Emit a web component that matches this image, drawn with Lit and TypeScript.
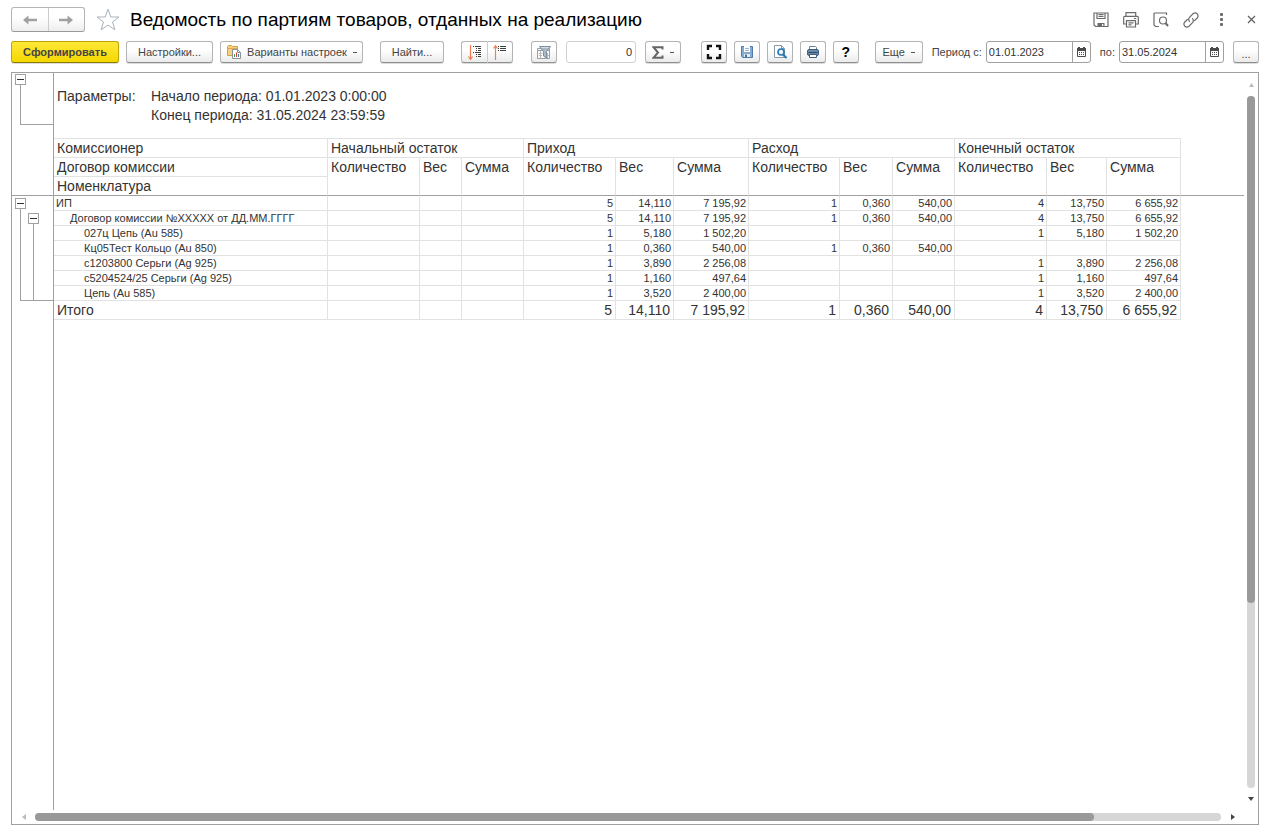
import { LitElement, html, css, svg, nothing } from "lit";
import { customElement, state } from "lit/decorators.js";
import { classMap } from "lit/directives/class-map.js";

interface Row {
  level: number;
  name: string;
  cells: string[];
}

const GROUPS = ["Начальный остаток", "Приход", "Расход", "Конечный остаток"];
const METRICS = ["Количество", "Вес", "Сумма"];
const E3 = ["", "", ""];

const ROWS: Row[] = [
  { level: 0, name: "ИП", cells: [...E3, "5", "14,110", "7 195,92", "1", "0,360", "540,00", "4", "13,750", "6 655,92"] },
  { level: 1, name: "Договор комиссии №XXXXX от ДД.ММ.ГГГГ", cells: [...E3, "5", "14,110", "7 195,92", "1", "0,360", "540,00", "4", "13,750", "6 655,92"] },
  { level: 2, name: "027ц Цепь (Au 585)", cells: [...E3, "1", "5,180", "1 502,20", ...E3, "1", "5,180", "1 502,20"] },
  { level: 2, name: "Кц05Тест Кольцо (Au 850)", cells: [...E3, "1", "0,360", "540,00", "1", "0,360", "540,00", ...E3] },
  { level: 2, name: "с1203800 Серьги (Ag 925)", cells: [...E3, "1", "3,890", "2 256,08", ...E3, "1", "3,890", "2 256,08"] },
  { level: 2, name: "с5204524/25 Серьги (Ag 925)", cells: [...E3, "1", "1,160", "497,64", ...E3, "1", "1,160", "497,64"] },
  { level: 2, name: "Цепь (Au 585)", cells: [...E3, "1", "3,520", "2 400,00", ...E3, "1", "3,520", "2 400,00"] },
];
const TOTAL = [...E3, "5", "14,110", "7 195,92", "1", "0,360", "540,00", "4", "13,750", "6 655,92"];

const icon = (size: number, body: unknown, height = size) =>
  html`<svg width=${size} height=${height} viewBox="0 0 ${size} ${height}" fill="none" aria-hidden="true">${body}</svg>`;

const arrowLeft = icon(16, svg`<path d="M1 6 6.500 1.500V4.700H15V7.300H6.500V10.500Z" fill="#a0a0a0"/>`, 12);
const arrowRight = icon(16, svg`<path d="M15 6 9.500 1.500V4.700H1V7.300H9.500V10.500Z" fill="#a0a0a0"/>`, 12);
const star = icon(24, svg`<path d="M12 1.200 14.800 9H23L16.500 13.900 18.900 21.800 12 17.100 5.100 21.800 7.500 13.900 1 9H9.200Z" stroke="#a9b2bb" stroke-width="1"/>`, 23);

const hSave = icon(16, svg`<g stroke="#6b6b6b" stroke-width="1.200"><path d="M1 1H15V14.500H2.500L1 13Z"/><path d="M4 1V6.500H12V1M5.500 2.700H10.500M5.500 4.500H10.500"/></g><path d="M4.500 11H11.500V14.500H4.500Z" fill="#6b6b6b"/><path d="M9 12H10.300V14H9Z" fill="#fff"/>`);
const hPrint = icon(16, svg`<g stroke="#6b6b6b" stroke-width="1.200"><path d="M3 4.300V.7H12.700V4.300"/><path d="M3 12H.7V5.300Q.7 4.300 1.700 4.300H14.300Q15.300 4.300 15.300 5.300V12H13"/><path d="M3.500 8.700H12.500V15H3.500ZM5.500 10.800H10.500M5.500 12.900H8.500M11 6.500H13.300"/></g>`);
const hPreview = icon(16, svg`<g stroke="#6b6b6b" stroke-width="1.200"><path d="M6 14.500H2.500L1 13V2Q1 1 2 1H13.500V3"/><circle cx="10" cy="8.500" r="3.500"/><path d="M12.500 11 15 14" stroke-width="2"/></g>`);
const hLink = icon(16, svg`<g stroke="#6b6b6b" stroke-width="1.200" stroke-linecap="round"><path d="M6.500 9.500Q4.800 7.300 6.500 5.300L10 1.800Q12.200 0 14.200 1.800 16 4 14.200 6L11.700 8.500"/><path d="M9.500 6.500Q11.200 8.700 9.500 10.700L6 14.200Q3.800 16 1.800 14.200 0 12 1.800 10L4.300 7.500"/></g>`);
const hDots = icon(16, svg`<g fill="#6b6b6b"><rect x="7" y="1" width="3" height="3" rx="1"/><rect x="7" y="6" width="3" height="3" rx="1"/><rect x="7" y="11" width="3" height="3" rx="1"/></g>`);
const hClose = icon(16, svg`<path d="M5 4 12 11M12 4 5 11" stroke="#5f5f5f" stroke-width="1.200"/>`);

const variants = icon(16, svg`<path d="M1.500 11.500V2.500L2.500 1.500H5.500L6.500 2.500H11.500V11.500Z" fill="#f8cf7c" stroke="#d6a044"/><path d="M2 4.500H11" stroke="#dca952"/><path d="M6.500 5.500H11.500L14.500 8.500V14.500H6.500Z" fill="#fff" stroke="#8794a0"/><path d="M11.500 5.500V8.500H14.500" stroke="#8794a0"/><path d="M8.500 13V10" stroke="#4a9b4a"/><path d="M10.500 13V8.500" stroke="#d33b2f"/><path d="M12.500 13V10" stroke="#4178b5"/>`);
const expand = icon(14, svg`<path d="M2.500 0V14M.5 11.500 2.500 14.500 4.500 11.500" stroke="#f07f4f" stroke-width="1.200"/><path d="M5 1.500H6M7 1.500H13M8 3.500H9M10 3.500H13M8 5.500H9M10 5.500H13M5 7.500H6M7 7.500H13M8 9.500H9M10 9.500H13M8 11.500H9M10 11.500H13" stroke="#3c3c3c"/>`, 15);
const collapse = icon(14, svg`<path d="M2.500 15V1M.5 3.500 2.500 .7 4.500 3.500" stroke="#f07f4f" stroke-width="1.200"/><path d="M5 1.500H6M7 1.500H13M5 3.500H6M7 3.500H13M5 5.500H6M7 5.500H13" stroke="#3c3c3c"/>`, 15);
const filter = icon(16, svg`<path d="M1.500 3.500H13.500V13.500H1.500Z" fill="#f7f7f7" stroke="#98a1a8"/><path d="M1.500 5.500H13.500" stroke="#98a1a8"/><path d="M4.500 6V13M11.500 8V13M3 8.500H6M3 10.500H6M10 10.500H13" stroke="#b4bbc1"/><path d="M3.500 1.500H14.500L10.500 6.500V13L7.500 11V6.500Z" fill="#a9b8c5" stroke="#7f8f9d"/><path d="M5 2.500H13" stroke="#d3dce4"/>`, 15);
const sigma = icon(12, svg`<path d="M10.500 3.500V1.200H1.500L6 6.500 1.500 11.800H10.500V9.500" stroke="#666" stroke-width="2"/>`, 13);
const full = icon(16, svg`<path d="M2 6V2H6M10 2H14V6M14 10V14H10M6 14H2V10" stroke="#111" stroke-width="2.400"/>`);
const save = icon(14, svg`<path d="M1.500 1.500H12.500V12.500H2.500L1.500 11.500Z" fill="#85abd0" stroke="#527ca6"/><path d="M4 1H10V7H4Z" fill="#fff"/><path d="M5 3.500H9M5 5.500H9" stroke="#9eb9d3"/><path d="M4 9H10V12H4Z" fill="#e6eef5"/><path d="M5 9.500H7V12H5Z" fill="#44719f"/>`);
const preview = icon(16, svg`<path d="M2.500 1.500H9.500L12.500 4.500V13.500H2.500Z" fill="#fff" stroke="#8a99a6"/><path d="M9.500 1.500V4.500H12.500" stroke="#8a99a6"/><circle cx="9" cy="8" r="3" fill="#eaf4fb" stroke="#2879b0" stroke-width="1.600"/><path d="M11 10.500 14.500 14" stroke="#2879b0" stroke-width="2.200"/>`);
const print = icon(14, svg`<path d="M3.500 5V1.500H9.500L10.500 2.500V5" fill="#fff" stroke="#65809b"/><rect x="1.500" y="4.500" width="11" height="6" rx="1.500" fill="#6b8aa9" stroke="#3f6183"/><path d="M2.500 7.500H11.500" stroke="#2f4c69"/><path d="M3.500 9.500H10.500V12.500H3.500Z" fill="#fff" stroke="#3c5e80"/>`);
const calendar = icon(9, svg`<path d="M.5 2H8.500V9.500H.5Z" stroke="#4b4b4b"/><path d="M0 1H9V4H0ZM1 0H3V2H1ZM6 0H8V2H6Z" fill="#4b4b4b"/><path d="M2 5.500H7M2 7.500H7" stroke="#4b4b4b" stroke-dasharray="1 1"/>`, 10);
const minus = icon(9, svg`<path d="M1 4.500H8" stroke="#333"/>`);

const HEADER_ICONS: [string, unknown][] = [
  ["Сохранить", hSave],
  ["Печать", hPrint],
  ["Предварительный просмотр", hPreview],
  ["Получить ссылку", hLink],
  ["Дополнительно", hDots],
  ["Закрыть", hClose],
];
const VIEW_ICONS: [string, unknown][] = [
  ["Во весь экран", full],
  ["Сохранить как", save],
  ["Просмотр", preview],
  ["Напечатать", print],
];

@customElement("app-root")
export class AppRoot extends LitElement {
  @state() private from = "01.01.2023";
  @state() private to = "31.05.2024";

  static styles = css`
    :host {
      display: flex;
      flex-direction: column;
      box-sizing: border-box;
      min-height: 100vh;
      padding: 7px 16px 9px 11px;
      background: #fff;
      color: #333;
      font-family: "Liberation Sans", Arial, sans-serif;
      font-size: 11px;
    }
    * { box-sizing: border-box; }
    svg { display: block; flex: none; }
    button, input { font: inherit; color: inherit; margin: 0; }
    button { padding: 0; border: 0; background: none; }

    .head { display: flex; align-items: center; height: 25px; }
    .nav {
      display: flex;
      width: 74px;
      height: 25px;
      border: 1px solid #b4b4b4;
      border-bottom-color: #999;
      border-radius: 3px;
      background: linear-gradient(#fff 40%, #eee);
    }
    .nav button { flex: 1; display: grid; place-items: center; }
    .nav button + button { border-left: 1px solid #ccc; }
    .star { margin: 0 10px 0 11px; }
    .title { flex: 1; margin: 0; font-size: 19px; line-height: 24px; font-weight: 400; color: #000; white-space: nowrap; }
    .tools { display: flex; gap: 14px; }

    .bar { display: flex; align-items: center; gap: 17px; margin-top: 9px; height: 22px; white-space: nowrap; }
    .set { display: flex; align-items: center; gap: 7px; }
    .wide { gap: 9px; }
    .right { margin-left: auto; }
    .views { margin-right: 7px; }
    .btn {
      display: flex;
      align-items: center;
      justify-content: center;
      gap: 5px;
      height: 22px;
      min-width: 26px;
      border: 1px solid #b4b4b4;
      border-bottom-color: #8f8f8f;
      border-radius: 3px;
      background: linear-gradient(#fff 40%, #ebebeb);
      box-shadow: 0 1px 0 #ddd;
      color: #444;
    }
    .run { width: 108px; font-weight: 700; border-color: #c2a400; border-bottom-color: #8f7a00; background: linear-gradient(#ffe838, #f5d800); color: #444; }
    .setup { width: 87px; }
    .variants { width: 143px; }
    .find { width: 64px; }
    .sum { width: 36px; }
    .more { width: 48px; }
    .help { font-size: 14px; font-weight: 700; color: #000; }
    .dots { padding-top: 4px; }
    .caret { width: 4px; height: 1px; margin: 1px 0 0 1px; background: #555; }
    .pair { display: flex; margin-right: 1px; }
    .pair .btn:first-child { border-radius: 3px 0 0 3px; border-right: 0; }
    .pair .btn:last-child { border-radius: 0 3px 3px 0; border-left-color: #ccc; }
    .num { width: 70px; height: 22px; padding: 0 3px; border: 1px solid #d0d0d0; border-radius: 3px; text-align: right; }
    .label { color: #444; }
    .near { margin-left: -5px; }
    .date { display: flex; width: 105px; height: 22px; border: 1px solid #a0a0a0; border-radius: 3px; background: #fff; }
    .date input { flex: 1; min-width: 0; padding: 0 2px; border: 0; background: none; outline: 0; }
    .date button { width: 18px; display: grid; place-items: center; border-left: 1px solid #a0a0a0; }

    .panel {
      flex: 1;
      display: grid;
      grid-template: minmax(0, 1fr) 14px / minmax(0, 1fr) 14px;
      margin-top: 9px;
      border: 1px solid #a0a0a0;
    }
    .sheet { display: flex; overflow: hidden; }
    .gutter { flex: none; width: 42px; border-right: 1px solid #a0a0a0; }
    .frozen { height: 123px; padding: 1px 0 0 3px; border-bottom: 1px solid #a0a0a0; }
    .tree { display: grid; grid-template: 11px minmax(0, 1fr) / 1fr; height: 51px; }
    .nested { grid-template: 11px 4px 11px minmax(0, 1fr) / 13px 1fr; height: 103px; margin: 2px 0 0 3px; }
    .toggle { display: grid; place-items: center; width: 11px; height: 11px; border: 1px solid #a0a0a0; background: #fff; }
    .stem { grid-row: 2 / -1; grid-column: 1 / -1; margin-left: 5px; border: solid #a0a0a0; border-width: 0 0 1px 1px; }
    .inner { grid-row: 3; grid-column: 2; }
    .innerstem { grid-row: 4; grid-column: 2; border-bottom: 0; }

    .content { flex: 1; min-width: 0; }
    .params {
      display: grid;
      grid-template-columns: 94px 1fr;
      margin: 0;
      padding: 14px 3px 13px;
      font-size: 14px;
      line-height: 19px;
    }
    .params dd { margin: 0; grid-column: 2; }
    table { width: 100%; table-layout: fixed; border-collapse: separate; border-spacing: 0; }
    .c-name { width: 274px; } .c92 { width: 92px; } .c91 { width: 91px; } .c42 { width: 42px; }
    .c62 { width: 62px; } .c58 { width: 58px; } .c75 { width: 75px; } .c53 { width: 53px; }
    .c60 { width: 60px; } .c74 { width: 74px; }
    th, td { padding: 0 2px; border: solid #e2e2e2; border-width: 0 1px 1px 0; font-weight: 400; text-align: left; vertical-align: top; white-space: nowrap; line-height: 14px; }
    thead th { padding: 0 3px; font-size: 14px; line-height: 18px; }
    thead tr:first-child th { border-top-width: 1px; }
    thead .base { border-bottom-color: #a0a0a0; }
    .rest { border: 0; }
    thead tr:first-child .rest { border: solid #a0a0a0; border-width: 0 0 1px; }
    td { text-align: right; }
    .l1 { padding-left: 16px; }
    .l2 { padding-left: 30px; }
    tfoot th, tfoot td { padding: 0 3px; font-size: 14px; line-height: 18px; }

    .vbar { display: grid; grid-template-rows: 23px 1fr 22px; justify-items: center; }
    .hbar { display: grid; grid-template-columns: 23px 1fr 23px; align-items: center; }
    .vbar > *, .hbar > * { place-self: center; }
    .vbar .track { width: 8px; height: 100%; }
    .hbar .track { height: 8px; width: 100%; }
    .track { border-radius: 4px; background: #d6d6d6; }
    .thumb { border-radius: 4px; background: #999; }
    .vbar .thumb { height: 73.2%; }
    .hbar .thumb { width: 89.3%; height: 8px; }
  `;

  private dateField(id: string, value: string, set: (v: string) => void) {
    return html`<span class="date">
      <input id=${id} type="text" .value=${value} @change=${(e: Event) => set((e.target as HTMLInputElement).value)} />
      <button type="button" aria-label="Выбрать дату">${calendar}</button>
    </span>`;
  }

  private toolbar() {
    return html`<div class="bar" role="toolbar">
      <div class="set">
        <button class="btn run">Сформировать</button>
        <button class="btn setup">Настройки...</button>
        <button class="btn variants">${variants}<span>Варианты настроек</span><i class="caret"></i></button>
      </div>
      <button class="btn find">Найти...</button>
      <div class="pair">
        <button class="btn" aria-label="Развернуть группы">${expand}</button>
        <button class="btn" aria-label="Свернуть группы">${collapse}</button>
      </div>
      <div class="set wide">
        <button class="btn" aria-label="Отбор">${filter}</button>
        <input class="num" type="text" value="0" aria-label="Сумма выделенных ячеек" />
        <button class="btn sum" aria-label="Сумма">${sigma}<i class="caret"></i></button>
      </div>
      <div class="set wide right">
        <div class="set views">
          ${VIEW_ICONS.map(([name, glyph]) => html`<button class="btn" aria-label=${name}>${glyph}</button>`)}
          <button class="btn help">?</button>
        </div>
        <button class="btn more"><span>Еще</span><i class="caret"></i></button>
        <label class="label" for="from">Период с:</label>
        <span class="near">${this.dateField("from", this.from, (v) => (this.from = v))}</span>
        <label class="label" for="to">по:</label>
        <span class="near">${this.dateField("to", this.to, (v) => (this.to = v))}</span>
        <button class="btn dots" aria-label="Выбрать период">...</button>
      </div>
    </div>`;
  }

  private table() {
    return html`<table>
      <colgroup>
        <col class="c-name" />
        ${["c92", "c42", "c62", "c92", "c58", "c75", "c91", "c53", "c62", "c92", "c60", "c74"].map((c) => html`<col class=${c} />`)}
        <col />
      </colgroup>
      <thead>
        <tr>
          <th>Комиссионер</th>
          ${GROUPS.map((g) => html`<th colspan="3">${g}</th>`)}
          <th class="rest" rowspan="3"></th>
        </tr>
        <tr>
          <th>Договор комиссии</th>
          ${GROUPS.map(() => METRICS.map((m) => html`<th class="base" rowspan="2">${m}</th>`))}
        </tr>
        <tr><th class="base">Номенклатура</th></tr>
      </thead>
      <tbody>
        ${ROWS.map((r) => html`<tr>
          <th class=${classMap({ l1: r.level === 1, l2: r.level === 2 })} scope="row">${r.name}</th>
          ${r.cells.map((c) => html`<td>${c || nothing}</td>`)}
          <td class="rest"></td>
        </tr>`)}
      </tbody>
      <tfoot>
        <tr><th scope="row">Итого</th>${TOTAL.map((c) => html`<td>${c || nothing}</td>`)}<td class="rest"></td></tr>
      </tfoot>
    </table>`;
  }

  render() {
    return html`
      <header class="head">
        <div class="nav">
          <button aria-label="Назад">${arrowLeft}</button>
          <button aria-label="Вперед">${arrowRight}</button>
        </div>
        <button class="star" aria-label="В избранное">${star}</button>
        <h1 class="title">Ведомость по партиям товаров, отданных на реализацию</h1>
        <div class="tools">${HEADER_ICONS.map(([name, glyph]) => html`<button aria-label=${name}>${glyph}</button>`)}</div>
      </header>
      ${this.toolbar()}
      <main class="panel">
        <div class="sheet">
          <div class="gutter">
            <div class="frozen">
              <div class="tree">
                <button class="toggle" aria-label="Свернуть параметры">${minus}</button>
                <div class="stem"></div>
              </div>
            </div>
            <div class="tree nested">
              <button class="toggle" aria-label="Свернуть комиссионера">${minus}</button>
              <div class="stem"></div>
              <button class="toggle inner" aria-label="Свернуть договор">${minus}</button>
              <div class="stem innerstem"></div>
            </div>
          </div>
          <div class="content">
            <dl class="params">
              <dt>Параметры:</dt>
              <dd>Начало периода: 01.01.2023 0:00:00</dd>
              <dd>Конец периода: 31.05.2024 23:59:59</dd>
            </dl>
            ${this.table()}
          </div>
        </div>
        <div class="vbar">
          ${icon(5, svg`<path d="M0 4 2.500 0 5 4Z" fill="#bbb"/>`, 4)}
          <div class="track"><div class="thumb"></div></div>
          ${icon(6, svg`<path d="M0 0H6L3 4Z" fill="#444"/>`, 4)}
        </div>
        <div class="hbar">
          ${icon(4, svg`<path d="M4 0V6L0 3Z" fill="#bbb"/>`, 6)}
          <div class="track"><div class="thumb"></div></div>
          ${icon(4, svg`<path d="M0 0V6L4 3Z" fill="#444"/>`, 6)}
        </div>
      </main>
    `;
  }
}
